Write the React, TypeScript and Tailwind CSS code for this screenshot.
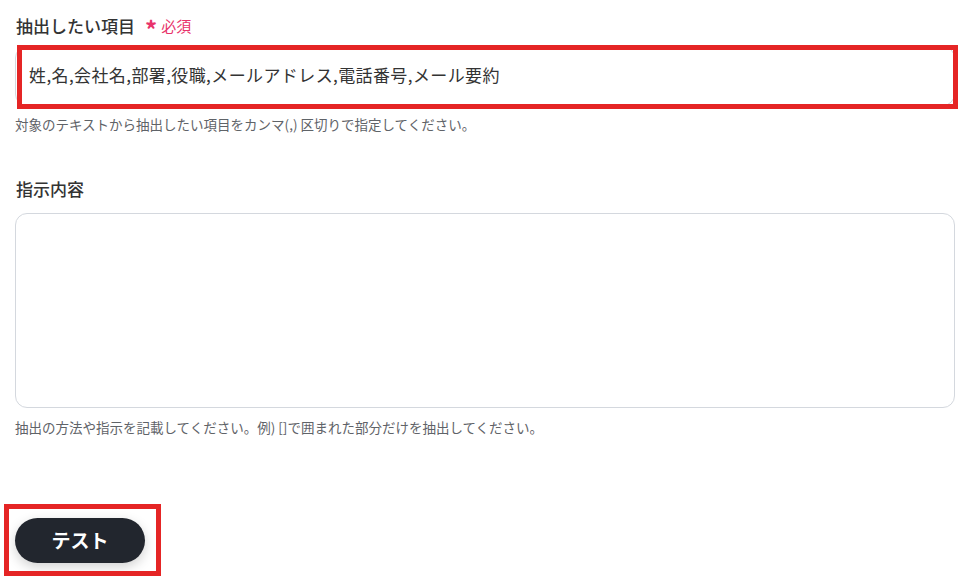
const App = () => {
  const font = { fontFamily: '"Noto Sans CJK JP", "Noto Sans", sans-serif' };

  return (
    <div className="min-h-screen bg-white text-[#333333] px-[15px] pt-[12px]" style={font}>
      {/* 抽出したい項目 */}
      <div className="flex items-center h-[26px] pl-px">
        <span className="text-[17px] font-medium leading-none">抽出したい項目</span>
        <span className="ml-[10px] flex items-center text-[#e8336b]">
          <span className="text-[24px] font-bold leading-none mt-[8px]">*</span>
          <span className="ml-[4px] text-[15px] leading-none">必須</span>
        </span>
      </div>
      <div className="relative mt-[8px]">
        <div className="h-[60px] rounded-[12px] border border-[#d4d8de] flex items-center pl-[13px] pb-[3px] text-[17px] tracking-[0.4px]">
          姓,名,会社名,部署,役職,メールアドレス,電話番号,メール要約
        </div>
        <div className="absolute left-[2px] -top-[1px] w-[941px] h-[64px] border-[5px] border-[#e52525]" />
      </div>
      <p className="mt-[9px] text-[13.5px] leading-[18px] text-[#5f6368]">
        対象のテキストから抽出したい項目をカンマ(,) 区切りで指定してください。
      </p>

      {/* 指示内容 */}
      <div className="mt-[42px] h-[26px] flex items-center pl-px">
        <span className="text-[17px] font-medium leading-none">指示内容</span>
      </div>
      <div className="mt-[12px] h-[195px] rounded-[12px] border border-[#d4d8de]" />
      <p className="mt-[10px] text-[13.5px] leading-[18px] text-[#5f6368]">
        抽出の方法や指示を記載してください。例) []で囲まれた部分だけを抽出してください。
      </p>

      {/* テスト */}
      <div className="relative mt-[82px] w-[130px]">
        <button className="w-[130px] h-[45px] rounded-full bg-[#22262e] text-white text-[19px] font-bold shadow-[0_4px_12px_rgba(0,0,0,0.18)]">
          テスト
        </button>
        <div className="absolute -left-[11px] -top-[14px] w-[157px] h-[72px] border-[5px] border-[#e52525]" />
      </div>
    </div>
  );
};

export default App;
